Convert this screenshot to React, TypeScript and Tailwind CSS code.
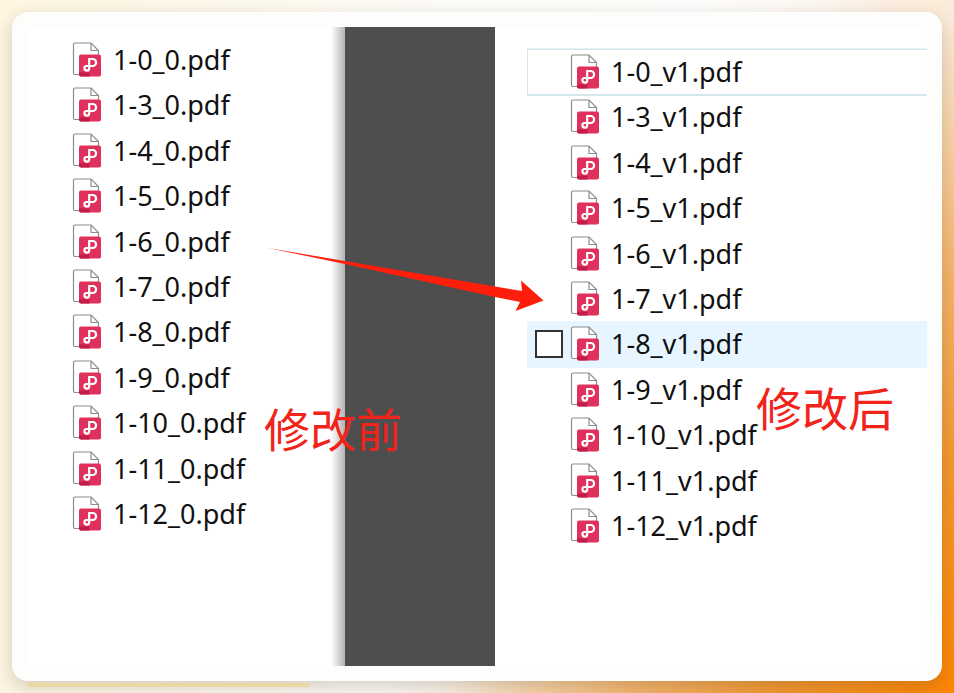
import React from "react";

const beforeFiles = [
  "1-0_0.pdf",
  "1-3_0.pdf",
  "1-4_0.pdf",
  "1-5_0.pdf",
  "1-6_0.pdf",
  "1-7_0.pdf",
  "1-8_0.pdf",
  "1-9_0.pdf",
  "1-10_0.pdf",
  "1-11_0.pdf",
  "1-12_0.pdf",
];

const afterFiles = [
  "1-0_v1.pdf",
  "1-3_v1.pdf",
  "1-4_v1.pdf",
  "1-5_v1.pdf",
  "1-6_v1.pdf",
  "1-7_v1.pdf",
  "1-8_v1.pdf",
  "1-9_v1.pdf",
  "1-10_v1.pdf",
  "1-11_v1.pdf",
  "1-12_v1.pdf",
];

const focusedFile = "1-0_v1.pdf";
const hoveredFile = "1-8_v1.pdf";

const PdfIcon: React.FC = () => (
  <svg
    className="h-9 w-[30px] shrink-0"
    viewBox="0 0 30 36"
    fill="none"
    aria-hidden="true"
  >
    <path
      d="M3 1H19L26.5 8.5V32.5H3Q1.5 32.5 1.5 31V2.5Q1.5 1 3 1Z"
      fill="#fff"
      stroke="#8c8c8c"
      strokeWidth="1.2"
    />
    <path d="M19 1V8.5H26.5" stroke="#8c8c8c" strokeWidth="1.2" />
    <rect x="7" y="12.5" width="22" height="22" rx="2" fill="#e0315c" />
    <path d="M7 30.5H17.5V34.5H9Q7 34.5 7 32.5Z" fill="#c21c48" />
    <path
      d="M17.2 26.6V17H20.6A3.5 3.5 0 0 1 20.6 24H14.2A2.4 2.4 0 1 0 17.2 26.6V24"
      stroke="#fff"
      strokeWidth="2.2"
    />
  </svg>
);

const BeforeList: React.FC = () => (
  <ul className="grid h-[500px] grid-rows-11">
    {beforeFiles.map((name) => (
      <li key={name} className="flex items-center gap-[11px] pl-[45px]">
        <PdfIcon />
        <span>{name}</span>
      </li>
    ))}
  </ul>
);

const AfterList: React.FC = () => (
  <ul className="grid h-[500px] grid-rows-11">
    {afterFiles.map((name) => {
      const focused = name === focusedFile;
      const hovered = name === hoveredFile;

      return (
        <li
          key={name}
          className={`flex items-center pl-2 ${
            hovered
              ? "bg-[#e6f5ff] shadow-[0_1px_#e6f5ff,0_-1px_#e6f5ff]"
              : ""
          } ${
            focused
              ? "shadow-[inset_1px_0_#d3e8ea,inset_0_1px_#d3e8ea,0_-1px_#e6f2f3,0_2px_#d3e8ea] bg-white"
              : ""
          }`}
        >
          {/* Tick box column */}
          <div className="flex w-[35px] shrink-0">
            {hovered && (
              <input
                type="checkbox"
                aria-label={name}
                className="size-7 appearance-none border-2 border-[#333] bg-white"
              />
            )}
          </div>
          <div className="flex items-center gap-[11px]">
            <PdfIcon />
            <span>{name}</span>
          </div>
        </li>
      );
    })}
  </ul>
);

const App: React.FC = () => {
  return (
    <div className="flex min-h-screen flex-col bg-[radial-gradient(ellipse_60%_110%_at_100%_100%,#ff8600_0%,#f7982d_30%,#f8b56a_55%,#fbd9b0_76%,rgba(253,236,217,0.6)_88%,rgba(255,255,255,0)_100%),linear-gradient(90deg,#fff7e2,#fffdf8_45%,#ffffff_85%,#fdebd8)] px-3 pt-3 font-['Noto_Sans','Open_Sans',sans-serif] text-[27px] leading-9 text-[#111]">
      {/* Card */}
      <div className="flex flex-1 rounded-2xl bg-[#fdfdfc] p-[15px] shadow-[0_6px_20px_rgba(60,60,60,0.24)]">
        <div className="relative grid flex-1 grid-cols-[318fr_150fr_432fr] bg-white">
          <section className="bg-[linear-gradient(270deg,#b4b4b4,#fff_14px)] pt-[10px]">
            <BeforeList />
          </section>

          <div className="bg-[#4e4e4e]" />

          <section className="pt-[22px] pl-8">
            <AfterList />
          </section>

          {/* Notes over the lists */}
          <p className="absolute top-[368px] left-[237px] font-['Noto_Sans_CJK_SC',sans-serif] text-[46px] leading-[64px] text-[#f0241b]">
            修改前
          </p>
          <p className="absolute top-[347px] left-[729px] font-['Noto_Sans_CJK_SC',sans-serif] text-[46px] leading-[64px] text-[#f0241b]">
            修改后
          </p>
          <svg
            className="absolute top-[220px] left-[240px] h-[66px] w-[278px]"
            viewBox="0 0 278 66"
            aria-hidden="true"
          >
            <path
              d="M1 1L228 39.5L255 44L254 33.5L276.5 53.5L248.5 64L253 55L228 50L78 17Z"
              fill="#ff1e0c"
            />
          </svg>
        </div>
      </div>

      {/* Underline below the card */}
      <div className="mt-0.5 mb-1.5 ml-[15px] h-1 w-[283px] rounded-sm bg-[#ebd7a3]" />
    </div>
  );
};

export default App;
